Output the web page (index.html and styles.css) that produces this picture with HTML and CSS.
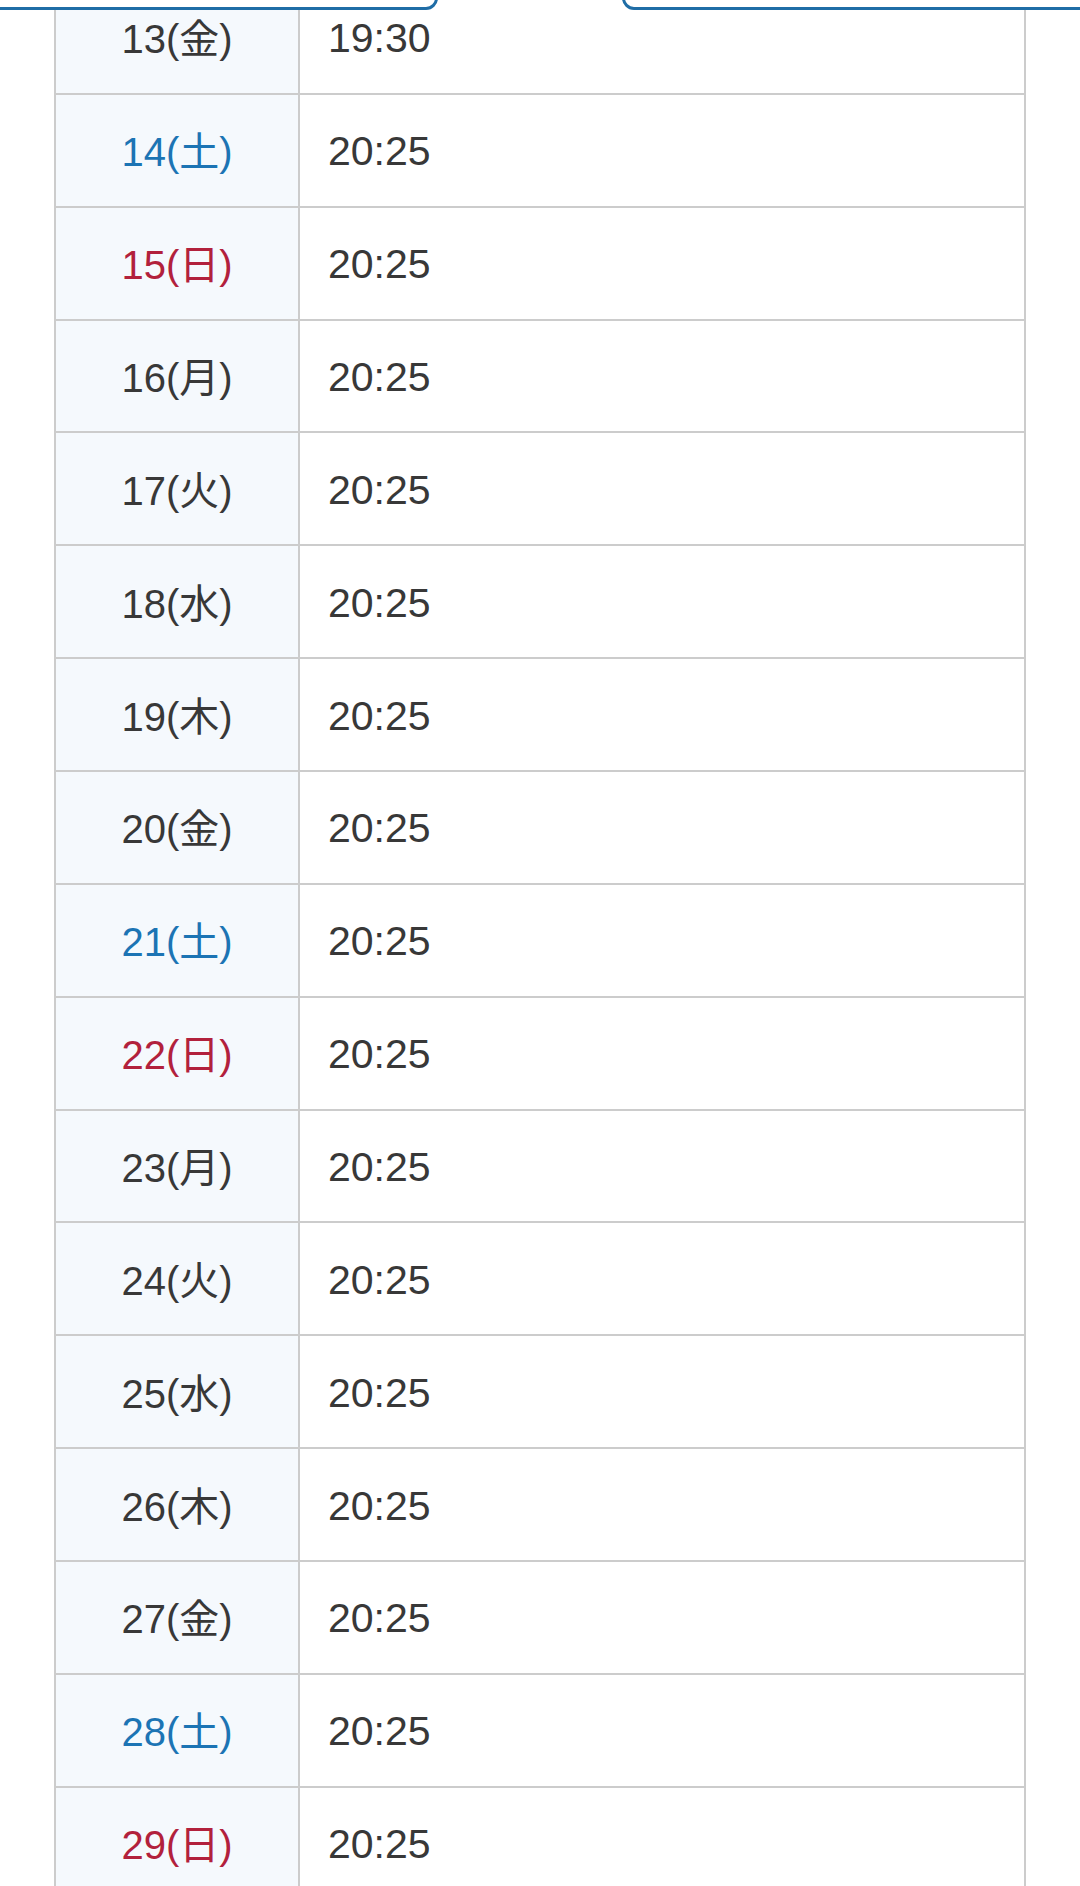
FILE: index.html
```html
<!DOCTYPE html>
<html lang="ja">
<head>
<meta charset="utf-8">
<link rel="stylesheet" href="styles.css">
<title>スケジュール</title>
</head>
<body>
<div class="tabs">
  <div class="tab tab-left"></div>
  <div class="tab tab-right"></div>
</div>
<div class="schedule">
  <div class="row"><div class="day">13(金)</div><div class="time">19:30</div></div>
  <div class="row"><div class="day sat">14(土)</div><div class="time">20:25</div></div>
  <div class="row"><div class="day sun">15(日)</div><div class="time">20:25</div></div>
  <div class="row"><div class="day">16(月)</div><div class="time">20:25</div></div>
  <div class="row"><div class="day">17(火)</div><div class="time">20:25</div></div>
  <div class="row"><div class="day">18(水)</div><div class="time">20:25</div></div>
  <div class="row"><div class="day">19(木)</div><div class="time">20:25</div></div>
  <div class="row"><div class="day">20(金)</div><div class="time">20:25</div></div>
  <div class="row"><div class="day sat">21(土)</div><div class="time">20:25</div></div>
  <div class="row"><div class="day sun">22(日)</div><div class="time">20:25</div></div>
  <div class="row"><div class="day">23(月)</div><div class="time">20:25</div></div>
  <div class="row"><div class="day">24(火)</div><div class="time">20:25</div></div>
  <div class="row"><div class="day">25(水)</div><div class="time">20:25</div></div>
  <div class="row"><div class="day">26(木)</div><div class="time">20:25</div></div>
  <div class="row"><div class="day">27(金)</div><div class="time">20:25</div></div>
  <div class="row"><div class="day sat">28(土)</div><div class="time">20:25</div></div>
  <div class="row"><div class="day sun">29(日)</div><div class="time">20:25</div></div>
</div>
</body>
</html>
```
FILE: styles.css
```css
html, body {
  margin: 0;
  padding: 0;
  background: #fff;
  overflow: hidden;
}
body {
  font-family: "Liberation Sans", "Noto Sans CJK JP", sans-serif;
  color: #333;
  width: 1080px;
  height: 1886px;
  position: relative;
}
.tabs {
  position: absolute;
  top: 0;
  left: 0;
  width: 1080px;
  height: 10px;
  z-index: 2;
}
.tab {
  position: absolute;
  top: -20px;
  height: 30px;
  box-sizing: border-box;
  border: 3px solid #1f6da6;
  border-radius: 0 0 12px 12px;
  background: #fff;
}
.tab-left {
  left: -20px;
  width: 458px;
}
.tab-right {
  left: 622px;
  width: 480px;
}
.schedule {
  margin: -18px 0 0 54px;
  width: 972px;
  box-sizing: border-box;
  border-left: 2px solid #cccccc;
  border-right: 2px solid #cccccc;
}
.row {
  display: flex;
  height: 112.87px;
  box-sizing: border-box;
  border-bottom: 2px solid #cccccc;
}
.day {
  width: 244px;
  box-sizing: border-box;
  border-right: 2px solid #cccccc;
  background: #f5f9fd;
  display: flex;
  align-items: center;
  justify-content: center;
  padding-bottom: 2px;
  font-size: 40px;
  color: #383838;
}
.day.sat { color: #1c74b4; }
.day.sun { color: #b2213c; }
.time {
  flex: 1;
  display: flex;
  align-items: center;
  padding-left: 28px;
  padding-top: 3px;
  font-size: 41px;
  color: #383838;
}
```
